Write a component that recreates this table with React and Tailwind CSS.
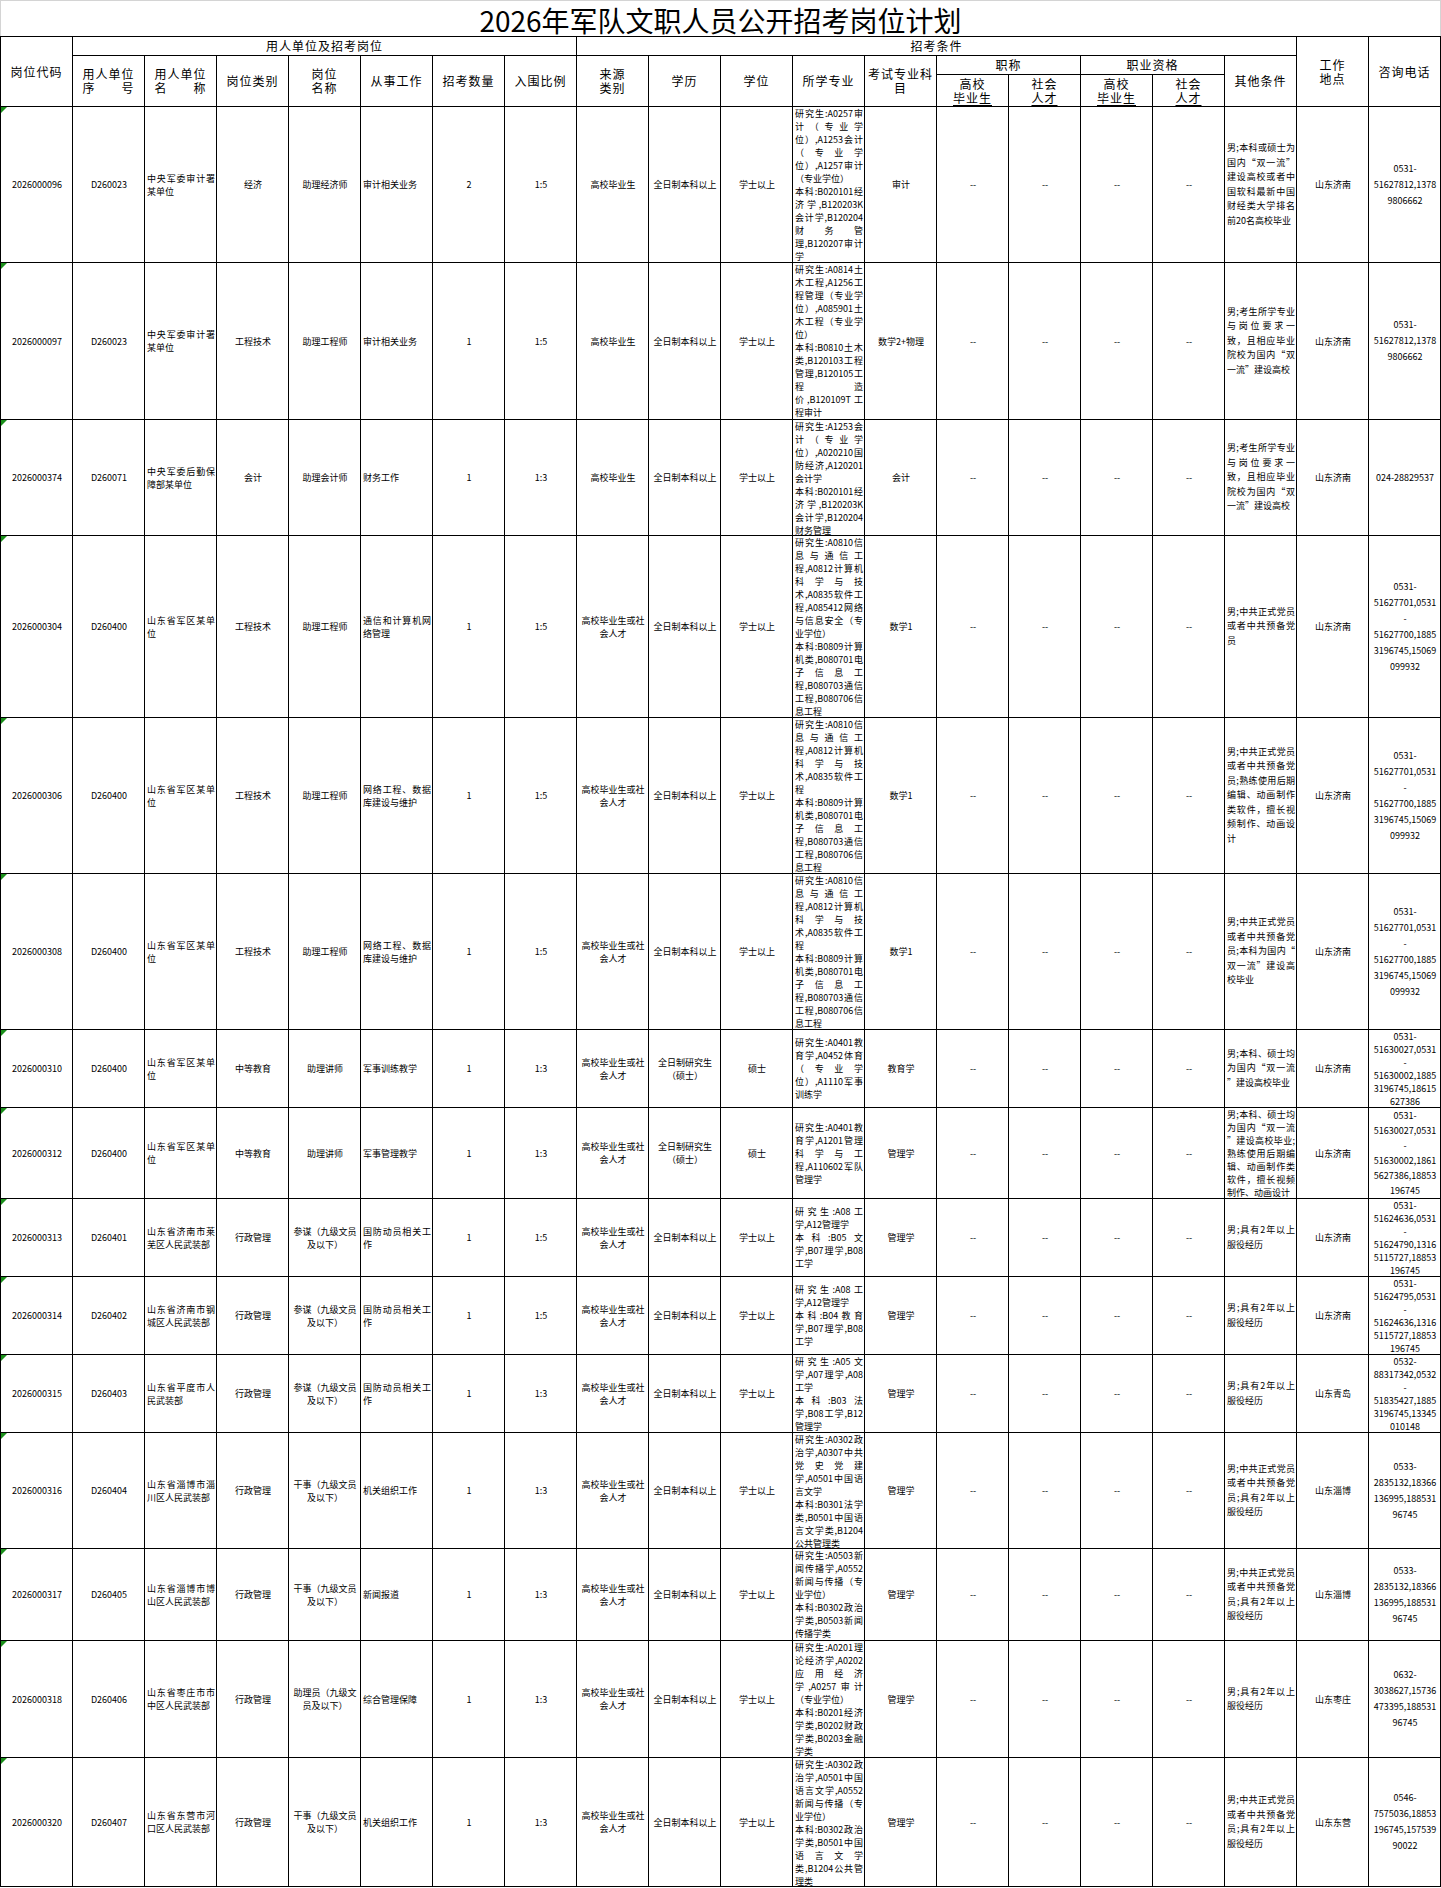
import React from 'react';

// row content heights (px), grid gap lines are 1px
const H = [155, 156, 115, 181, 155, 155, 77, 90, 77, 77, 77, 115, 91, 116, 128];

const P_JN1 = '0531-\n51627812,1378\n9806662';
const P_JN2 = '0531-\n51627701,0531\n-\n51627700,1885\n3196745,15069\n099932';
const P_ZB = '0533-\n2835132,18366\n136995,188531\n96745';

const O_PARTY = '男;中共正式党员|或者中共预备党|员;具有2年以上|服役经历';
const O_SERVE = '男;具有2年以上|服役经历';
const O_SCHOOL = '男;考生所学专业|与岗位要求一|致，且相应毕业|院校为国内“双|一流”建设高校';

const M_NET = '研究生:A0810信|息与通信工|程,A0812计算机|科学与技|术,A0835软件工|程\n本科:B0809计算|机类,B080701电|子信息工|程,B080703通信|工程,B080706信|息工程';

const rows = [
  ['2026000096', 'D260023', '中央军委审计署|某单位', '经济', '助理经济师', '审计相关业务', '2', '1:5', '高校毕业生', '全日制本科以上', '学士以上',
    '研究生:A0257审|计（专业学|位）,A1253会计|（专业学|位）,A1257审计|（专业学位）\n本科:B020101经|济学,B120203K|会计学,B120204|财务管|理,B120207审计|学',
    '审计', '男;本科或硕士为|国内“双一流”|建设高校或者中|国软科最新中国|财经类大学排名|前20名高校毕业', '山东济南', P_JN1],
  ['2026000097', 'D260023', '中央军委审计署|某单位', '工程技术', '助理工程师', '审计相关业务', '1', '1:5', '高校毕业生', '全日制本科以上', '学士以上',
    '研究生:A0814土|木工程,A1256工|程管理（专业学|位）,A085901土|木工程（专业学|位）\n本科:B0810土木|类,B120103工程|管理,B120105工|程造|价,B120109T工|程审计',
    '数学2+物理', O_SCHOOL, '山东济南', P_JN1],
  ['2026000374', 'D260071', '中央军委后勤保|障部某单位', '会计', '助理会计师', '财务工作', '1', '1:3', '高校毕业生', '全日制本科以上', '学士以上',
    '研究生:A1253会|计（专业学|位）,A020210国|防经济,A120201|会计学\n本科:B020101经|济学,B120203K|会计学,B120204|财务管理',
    '会计', O_SCHOOL, '山东济南', '024-28829537'],
  ['2026000304', 'D260400', '山东省军区某单|位', '工程技术', '助理工程师', '通信和计算机网|络管理', '1', '1:5', '高校毕业生或社\n会人才', '全日制本科以上', '学士以上',
    '研究生:A0810信|息与通信工|程,A0812计算机|科学与技|术,A0835软件工|程,A085412网络|与信息安全（专|业学位）\n本科:B0809计算|机类,B080701电|子信息工|程,B080703通信|工程,B080706信|息工程',
    '数学1', '男;中共正式党员|或者中共预备党|员', '山东济南', P_JN2],
  ['2026000306', 'D260400', '山东省军区某单|位', '工程技术', '助理工程师', '网络工程、数据|库建设与维护', '1', '1:5', '高校毕业生或社\n会人才', '全日制本科以上', '学士以上',
    M_NET, '数学1', '男;中共正式党员|或者中共预备党|员;熟练使用后期|编辑、动画制作|类软件，擅长视|频制作、动画设|计', '山东济南', P_JN2],
  ['2026000308', 'D260400', '山东省军区某单|位', '工程技术', '助理工程师', '网络工程、数据|库建设与维护', '1', '1:5', '高校毕业生或社\n会人才', '全日制本科以上', '学士以上',
    M_NET, '数学1', '男;中共正式党员|或者中共预备党|员;本科为国内“|双一流”建设高|校毕业', '山东济南', P_JN2],
  ['2026000310', 'D260400', '山东省军区某单|位', '中等教育', '助理讲师', '军事训练教学', '1', '1:3', '高校毕业生或社\n会人才', '全日制研究生\n（硕士）', '硕士',
    '研究生:A0401教|育学,A0452体育|（专业学|位）,A1110军事|训练学',
    '教育学', '男;本科、硕士均|为国内“双一流|”建设高校毕业', '山东济南', '0531-\n51630027,0531\n-\n51630002,1885\n3196745,18615\n627386'],
  ['2026000312', 'D260400', '山东省军区某单|位', '中等教育', '助理讲师', '军事管理教学', '1', '1:3', '高校毕业生或社\n会人才', '全日制研究生\n（硕士）', '硕士',
    '研究生:A0401教|育学,A1201管理|科学与工|程,A110602军队|管理学',
    '管理学', '男;本科、硕士均|为国内“双一流|”建设高校毕业;|熟练使用后期编|辑、动画制作类|软件，擅长视频|制作、动画设计', '山东济南', '0531-\n51630027,0531\n-\n51630002,1861\n5627386,18853\n196745'],
  ['2026000313', 'D260401', '山东省济南市莱|芜区人民武装部', '行政管理', '参谋（九级文员\n及以下）', '国防动员相关工|作', '1', '1:5', '高校毕业生或社\n会人才', '全日制本科以上', '学士以上',
    '研究生:A08工|学,A12管理学\n本科:B05文|学,B07理学,B08|工学',
    '管理学', O_SERVE, '山东济南', '0531-\n51624636,0531\n-\n51624790,1316\n5115727,18853\n196745'],
  ['2026000314', 'D260402', '山东省济南市钢|城区人民武装部', '行政管理', '参谋（九级文员\n及以下）', '国防动员相关工|作', '1', '1:5', '高校毕业生或社\n会人才', '全日制本科以上', '学士以上',
    '研究生:A08工|学,A12管理学\n本科:B04教育|学,B07理学,B08|工学',
    '管理学', O_SERVE, '山东济南', '0531-\n51624795,0531\n-\n51624636,1316\n5115727,18853\n196745'],
  ['2026000315', 'D260403', '山东省平度市人|民武装部', '行政管理', '参谋（九级文员\n及以下）', '国防动员相关工|作', '1', '1:3', '高校毕业生或社\n会人才', '全日制本科以上', '学士以上',
    '研究生:A05文|学,A07理学,A08|工学\n本科:B03法|学,B08工学,B12|管理学',
    '管理学', O_SERVE, '山东青岛', '0532-\n88317342,0532\n-\n51835427,1885\n3196745,13345\n010148'],
  ['2026000316', 'D260404', '山东省淄博市淄|川区人民武装部', '行政管理', '干事（九级文员\n及以下）', '机关组织工作', '1', '1:3', '高校毕业生或社\n会人才', '全日制本科以上', '学士以上',
    '研究生:A0302政|治学,A0307中共|党史党建|学,A0501中国语|言文学\n本科:B0301法学|类,B0501中国语|言文学类,B1204|公共管理类',
    '管理学', O_PARTY, '山东淄博', P_ZB],
  ['2026000317', 'D260405', '山东省淄博市博|山区人民武装部', '行政管理', '干事（九级文员\n及以下）', '新闻报道', '1', '1:3', '高校毕业生或社\n会人才', '全日制本科以上', '学士以上',
    '研究生:A0503新|闻传播学,A0552|新闻与传播（专|业学位）\n本科:B0302政治|学类,B0503新闻|传播学类',
    '管理学', O_PARTY, '山东淄博', P_ZB],
  ['2026000318', 'D260406', '山东省枣庄市市|中区人民武装部', '行政管理', '助理员（九级文\n员及以下）', '综合管理保障', '1', '1:3', '高校毕业生或社\n会人才', '全日制本科以上', '学士以上',
    '研究生:A0201理|论经济学,A0202|应用经济|学,A0257审计|（专业学位）\n本科:B0201经济|学类,B0202财政|学类,B0203金融|学类',
    '管理学', O_SERVE, '山东枣庄', '0632-\n3038627,15736\n473395,188531\n96745'],
  ['2026000320', 'D260407', '山东省东营市河|口区人民武装部', '行政管理', '干事（九级文员\n及以下）', '机关组织工作', '1', '1:3', '高校毕业生或社\n会人才', '全日制本科以上', '学士以上',
    '研究生:A0302政|治学,A0501中国|语言文学,A0552|新闻与传播（专|业学位）\n本科:B0302政治|学类,B0501中国|语言文学|类,B1204公共管|理类',
    '管理学', O_PARTY, '山东东营', '0546-\n7575036,18853\n196745,157539\n90022'],
];

// left aligned (wrapped, justified) columns
const LEFT = [2, 5, 11, 17];

function Lines({ text }) {
  const out = [];
  text.split('\n').forEach((p, pi) => {
    const ls = p.split('|');
    ls.forEach((l, li) => {
      out.push(
        <div key={pi + '-' + li} className={li < ls.length - 1 ? 'text-justify [text-align-last:justify]' : ''}>
          {l}
        </div>
      );
    });
  });
  return out;
}

function lineCount(text) {
  return text.split('\n').reduce((n, p) => n + p.split('|').length, 0);
}

function leadingFor(col, text, h) {
  const n = lineCount(text);
  if (col === 17) return Math.max(13, Math.min(14.5, h / n));
  if (col === 19) return Math.max(13, Math.min(16, h / n));
  return 13;
}

function Cell({ text, col, h }) {
  const left = LEFT.includes(col);
  return (
    <div
      className={`relative bg-white overflow-hidden flex flex-col [justify-content:safe_center] pl-[2px] pr-[1px] ${left ? 'text-left' : 'text-center'}`}
      style={{ lineHeight: leadingFor(col, text, h) + 'px' }}
    >
      {col === 0 && (
        <svg className="absolute left-0 top-0" width="6" height="6" viewBox="0 0 6 6">
          <polygon points="0,0 6,0 0,6" fill="#1a8f1a" />
        </svg>
      )}
      <Lines text={text} />
    </div>
  );
}

function Head({ className = '', children }) {
  return (
    <div className={`bg-white flex flex-col items-center justify-center text-center text-[12px] leading-[14px] tracking-[1px] ${className}`}>
      {children}
    </div>
  );
}

export default function App() {
  return (
    <div className="w-[1441px] bg-white text-black font-['Noto_Sans_CJK_SC',sans-serif]">
      <div className="h-[36px] border-t border-x border-[#d4d4d4] flex items-center justify-center text-[28px] leading-none pt-[3px]">
        2026年军队文职人员公开招考岗位计划
      </div>
      <div className="grid grid-cols-[repeat(20,minmax(0,1fr))] grid-rows-[18px_18px_31px_155px_156px_115px_181px_155px_155px_77px_90px_77px_77px_77px_115px_91px_116px_128px] gap-px bg-black border border-black text-[9px]">
        <Head className="col-start-1 row-start-1 row-span-3">岗位代码</Head>
        <Head className="col-start-2 col-span-7 row-start-1">用人单位及招考岗位</Head>
        <Head className="col-start-9 col-span-10 row-start-1">招考条件</Head>
        <Head className="col-start-19 row-start-1 row-span-3"><div>工作</div><div>地点</div></Head>
        <Head className="col-start-20 row-start-1 row-span-3">咨询电话</Head>

        <Head className="col-start-2 row-start-2 row-span-2"><div>用人单位</div><div>序　　号</div></Head>
        <Head className="col-start-3 row-start-2 row-span-2"><div>用人单位</div><div>名　　称</div></Head>
        <Head className="col-start-4 row-start-2 row-span-2">岗位类别</Head>
        <Head className="col-start-5 row-start-2 row-span-2"><div>岗位</div><div>名称</div></Head>
        <Head className="col-start-6 row-start-2 row-span-2">从事工作</Head>
        <Head className="col-start-7 row-start-2 row-span-2">招考数量</Head>
        <Head className="col-start-8 row-start-2 row-span-2">入围比例</Head>
        <Head className="col-start-9 row-start-2 row-span-2"><div>来源</div><div>类别</div></Head>
        <Head className="col-start-10 row-start-2 row-span-2">学历</Head>
        <Head className="col-start-11 row-start-2 row-span-2">学位</Head>
        <Head className="col-start-12 row-start-2 row-span-2">所学专业</Head>
        <Head className="col-start-13 row-start-2 row-span-2"><div>考试专业科</div><div>目</div></Head>
        <Head className="col-start-14 col-span-2 row-start-2">职称</Head>
        <Head className="col-start-16 col-span-2 row-start-2">职业资格</Head>
        <Head className="col-start-18 row-start-2 row-span-2">其他条件</Head>
        <Head className="col-start-14 row-start-3"><div>高校</div><div className="underline underline-offset-[2px]">毕业生</div></Head>
        <Head className="col-start-15 row-start-3"><div>社会</div><div className="underline underline-offset-[2px]">人才</div></Head>
        <Head className="col-start-16 row-start-3"><div>高校</div><div className="underline underline-offset-[2px]">毕业生</div></Head>
        <Head className="col-start-17 row-start-3"><div>社会</div><div className="underline underline-offset-[2px]">人才</div></Head>

        {rows.map((r, ri) => {
          const cells = [...r.slice(0, 13), '--', '--', '--', '--', ...r.slice(13)];
          return cells.map((t, ci) => <Cell key={ri + '-' + ci} text={t} col={ci} h={H[ri]} />);
        })}
      </div>
    </div>
  );
}
